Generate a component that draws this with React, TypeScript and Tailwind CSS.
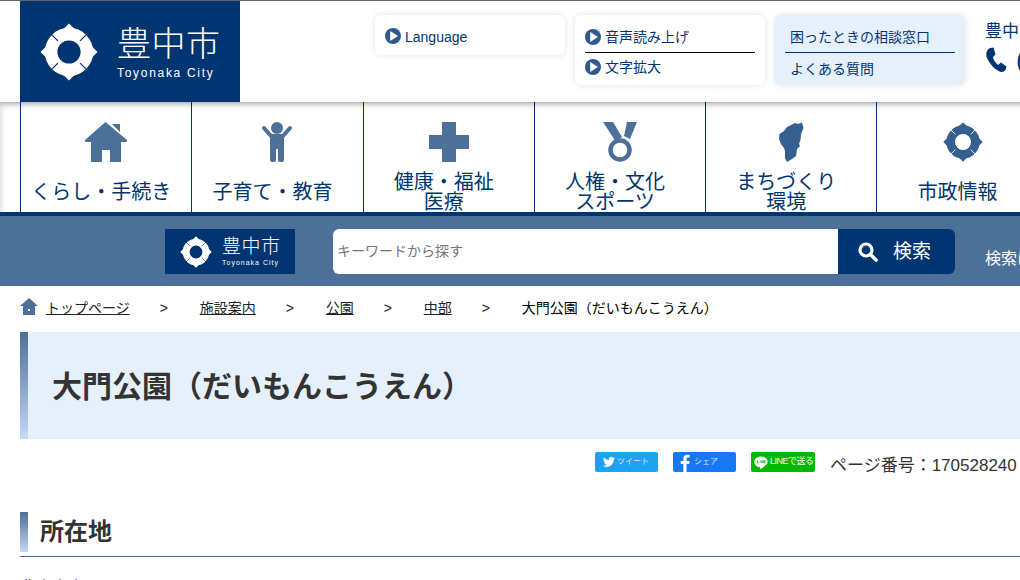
const F = "font-['Liberation_Sans','Noto_Sans_CJK_JP',sans-serif]";

function Emblem({ size, ring = "#ffffff", gap = "#003571" }: { size: number; ring?: string; gap?: string }) {
  return (
    <svg width={size} height={size} viewBox="0 0 60 60" className="shrink-0">
      <circle cx="30" cy="30" r="18.5" fill="none" stroke={ring} strokeWidth="13" />
      <path d="M30 0.500 L36 6.500 L24 6.500 Z M30 59.500 L36 53.500 L24 53.500 Z M0.500 30 L6.500 24 L6.500 36 Z M59.500 30 L53.500 24 L53.500 36 Z" fill={ring} />
      <path d="M18.500 18.500 L10 10 M41.500 18.500 L50 10 M18.500 41.500 L10 50 M41.500 41.500 L50 50" stroke={gap} strokeWidth="1.300" />
    </svg>
  );
}

function Play({ className = "" }: { className?: string }) {
  return (
    <svg width="16" height="16" viewBox="0 0 16 16" className={`shrink-0 ${className}`}>
      <circle cx="8" cy="8" r="8" fill="#2f5a8c" />
      <path d="M5.200 3 L13 8 L5.200 13 Z" fill="#ffffff" />
    </svg>
  );
}

const navIcon = "#4d7099";

const icons: Record<string, React.ReactNode> = {
  home: (
    <svg width="44" height="40" viewBox="0 0 44 40">
      <path d="M28 2 L36 2 L36 10 Z" fill={navIcon} />
      <path d="M21.500 0 L43 18 Q43.500 20 41 20 L37 20 L37 40 L26 40 L26 28 L18 28 L18 40 L7 40 L7 20 L3 20 Q0.500 20 1 18 Z" fill={navIcon} />
    </svg>
  ),
  child: (
    <svg width="32" height="40" viewBox="0 0 32 40">
      <circle cx="16" cy="6" r="6" fill={navIcon} />
      <path d="M3 6 L10 14 L22 14 L29 6" fill="none" stroke={navIcon} strokeWidth="4" strokeLinecap="round" strokeLinejoin="round" />
      <path d="M9 14 H23 V38 Q23 40 21 40 H18.500 Q17 40 17 38 V27 H15 V38 Q15 40 13.500 40 H11 Q9 40 9 38 Z" fill={navIcon} />
    </svg>
  ),
  plus: (
    <svg width="40" height="40" viewBox="0 0 40 40">
      <path d="M13 0 H27 V13 H40 V27 H27 V40 H13 V27 H0 V13 H13 Z" fill={navIcon} />
    </svg>
  ),
  medal: (
    <svg width="34" height="40" viewBox="0 0 34 40">
      <path d="M0 0 H10 L19 15 L13 20 Z M24 0 H34 L27 17 L21 14 Z" fill={navIcon} />
      <circle cx="17" cy="28" r="9.500" fill="none" stroke={navIcon} strokeWidth="4.500" />
    </svg>
  ),
  map: (
    <svg width="26" height="40" viewBox="0 0 26 40">
      <path d="M13 3 L17 1 L20 2 L24 0.500 L25.500 6 L23 12 L22.500 18 L21 22 L22 24 L19 27 L18 34 L14 37 L9 40 L7 36 L7 29 L6 26 L3 22 L1 17 L1.500 12 L6 9 L9 5 Z" fill="#355f8f" />
    </svg>
  ),
  emblem: <Emblem size={40} ring="#355f8f" gap="#ffffff" />,
};

const navItems = [
  { icon: "home", lines: ["くらし・手続き"] },
  { icon: "child", lines: ["子育て・教育"] },
  { icon: "plus", lines: ["健康・福祉", "医療"] },
  { icon: "medal", lines: ["人権・文化", "スポーツ"] },
  { icon: "map", lines: ["まちづくり", "環境"] },
  { icon: "emblem", lines: ["市政情報"] },
];

function BreadSep({ text, link = true }: { text: string; link?: boolean }) {
  return (
    <>
      <span className="ml-[30px] w-[8px] text-[14px]">&gt;</span>
      <span className={`ml-[32px] whitespace-nowrap ${link ? "underline" : "text-black"}`}>{text}</span>
    </>
  );
}

function ShareBtn({ bg, w, children }: { bg: string; w: string; children: React.ReactNode }) {
  return <div className={`flex h-[20px] items-center rounded-[2px] text-white ${bg} ${w}`}>{children}</div>;
}

export default function App() {
  return (
    <div className={`h-[580px] w-[1020px] overflow-hidden bg-white text-[#333333] ${F}`}>
      <div className="relative z-10 flex h-[102px] w-[1100px] border-t border-[#666666] bg-white pl-[20px] shadow-[0_2px_6px_rgba(0,0,0,0.35)]">
        <div className="flex h-[101px] w-[220px] items-center bg-[#003571] pl-[20px] text-white">
          <Emblem size={58} />
          <div className="ml-[19px] flex flex-col">
            <span className="text-[34px] leading-[40px] font-light tracking-[0.5px]">豊中市</span>
            <span className="mt-[2px] text-[12px] leading-[14px] tracking-[1.700px]">Toyonaka City</span>
          </div>
        </div>
        <div className="mt-[14px] ml-[135px] flex h-[40px] w-[190px] items-center rounded-[6px] bg-white pt-[4px] pl-[10px] text-[14px] text-[#003571] shadow-[0_0_6px_rgba(0,0,0,0.12)]">
          <Play className="mb-[3px]" />
          <span className="ml-[4px]">Language</span>
        </div>
        <div className="mt-[14px] ml-[10px] h-[70px] w-[190px] rounded-[6px] bg-white px-[10px] text-[14px] text-[#003571] shadow-[0_0_6px_rgba(0,0,0,0.12)]">
          <div className="flex h-[38px] items-center border-b border-black pt-[8px]">
            <Play className="mb-[2px]" />
            <span className="ml-[4px]">音声読み上げ</span>
          </div>
          <div className="flex h-[30px] items-center pb-[2px]">
            <Play />
            <span className="ml-[4px]">文字拡大</span>
          </div>
        </div>
        <div className="mt-[14px] ml-[10px] h-[70px] w-[190px] rounded-[6px] bg-[#e6f0fb] px-[10px] text-[14px] text-[#003571] shadow-[0_0_6px_rgba(0,0,0,0.12)]">
          <div className="flex h-[38px] items-center border-b border-[#003571] pt-[8px] pl-[5px]">困ったときの相談窓口</div>
          <div className="flex h-[32px] items-center pl-[5px]">よくある質問</div>
        </div>
        <div className="mt-[21px] ml-[20px] flex flex-col text-[#003571]">
          <span className="text-[17px] leading-[20px] whitespace-nowrap">豊中市役所</span>
          <div className="mt-[5px] flex items-center">
            <svg width="22" height="26" viewBox="0 0 22 26">
              <path d="M5 1 L8.500 0.500 L10.500 7.500 L8 10 Q8.500 14 13 18 L16 15.500 L21.500 19.500 L20.500 23 Q18 26 14.500 24.500 Q7 21 2.500 12 Q-1 5 5 1 Z" fill="#003571" />
            </svg>
            <span className="ml-[9px] text-[26px] leading-[26px]">(</span>
          </div>
        </div>
      </div>

      <div className="flex h-[114px] w-[1100px] border-b-4 border-[#003571] pl-[20px] shadow-[inset_5px_0_5px_-3px_rgba(0,0,0,0.12)]">
        {navItems.map((item) => (
          <div key={item.icon} className="flex h-[110px] w-[171.300px] shrink-0 flex-col items-center border-l border-[#003571] text-[20px] leading-[20px] text-[#003571]">
            <div className="flex h-[60px] shrink-0 items-end justify-center">
              {icons[item.icon]}
            </div>
            <div className={`mr-[10px] flex flex-col items-center whitespace-nowrap ${item.lines.length === 1 ? "mt-[20px]" : "mt-[10px]"}`}>
              {item.lines.map((l) => (
                <span key={l}>{l}</span>
              ))}
            </div>
          </div>
        ))}
      </div>

      <div className="flex h-[70px] w-[1100px] bg-[#4d7099] pt-[13px] pl-[165px]">
        <div className="flex h-[45px] w-[130px] items-center bg-[#003571] pl-[15px] text-white">
          <Emblem size={32} />
          <div className="ml-[10px] flex flex-col">
            <span className="text-[19px] leading-[22px] font-light tracking-[0.500px]">豊中市</span>
            <span className="text-[7px] leading-[9px] tracking-[1px]">Toyonaka City</span>
          </div>
        </div>
        <div className="ml-[38px] flex h-[45px] w-[505px] items-center rounded-l-[6px] bg-white pl-[4px] text-[14px] text-[#757575]">キーワードから探す</div>
        <div className="flex h-[45px] w-[117px] items-center rounded-r-[6px] bg-[#003571] pl-[20px] text-[19px] text-white">
          <svg width="20" height="20" viewBox="0 0 20 20">
            <circle cx="8" cy="8" r="6" fill="none" stroke="#ffffff" strokeWidth="3.200" />
            <path d="M12.500 12.500 L18 18" stroke="#ffffff" strokeWidth="3.600" strokeLinecap="round" />
          </svg>
          <span className="mt-[2px] ml-[15px]">検索</span>
        </div>
        <span className="mt-[20px] ml-[30px] text-[16px] leading-[20px] whitespace-nowrap text-white">検索について</span>
      </div>

      <div className="flex h-[46px] items-center pb-[2px] pl-[20px] text-[14px] whitespace-nowrap text-[#222222]">
        <svg width="18" height="18" viewBox="0 0 18 18" className="mb-[3px]">
          <path d="M9 0 L18 8 L15 8 L15 17 L3 17 L3 8 L0 8 Z" fill="#4d7099" />
          <rect x="8" y="11" width="2" height="2" fill="#ffffff" />
        </svg>
        <span className="ml-[8px] underline">トップページ</span>
        <BreadSep text="施設案内" />
        <BreadSep text="公園" />
        <BreadSep text="中部" />
        <BreadSep text="大門公園（だいもんこうえん）" link={false} />
      </div>

      <div className="ml-[20px] flex h-[107px] w-[1080px] bg-[#e6f0fb]">
        <div className="w-[8px] bg-gradient-to-b from-[#4d7099] to-[#c5daf5]" />
        <h1 className="mt-[33px] ml-[24px] text-[30px] leading-[44px] font-bold whitespace-nowrap">大門公園（だいもんこうえん）</h1>
      </div>

      <div className="mt-[13px] flex h-[20px] w-[1100px] pl-[595px] whitespace-nowrap">
        <ShareBtn bg="bg-[#1da1f2]" w="w-[63px]">
          <svg width="12" height="10" viewBox="0 0 24 20" className="ml-[8px]">
            <path d="M24 2.400a10 10 0 0 1-2.800.8A5 5 0 0 0 23.300.5a10 10 0 0 1-3.100 1.200A4.900 4.900 0 0 0 11.800 6.200 14 14 0 0 1 1.700 1a5 5 0 0 0 1.500 6.600 5 5 0 0 1-2.200-.6 5 5 0 0 0 3.900 4.900 5 5 0 0 1-2.200.1 5 5 0 0 0 4.600 3.400A10 10 0 0 1 0 17.500 14 14 0 0 0 21.500 5.600 10 10 0 0 0 24 2.400z" fill="#ffffff" />
          </svg>
          <span className="ml-[2px] text-[8px] opacity-80">ツイート</span>
        </ShareBtn>
        <div className="ml-[15px]">
          <ShareBtn bg="bg-[#1877f2]" w="w-[63px]">
            <svg width="10" height="18" viewBox="0 0 10 18" className="mt-[1px] ml-[7px]">
              <path d="M6.500 18V10h2.700l.4-3H6.500V5c0-.9.3-1.500 1.500-1.500H9.700V.8C9.400.8 8.400.7 7.300.7 5 .7 3.400 2.100 3.400 4.700V7H.7v3h2.700v8z" fill="#ffffff" />
            </svg>
            <span className="ml-[4px] text-[8px] opacity-80">シェア</span>
          </ShareBtn>
        </div>
        <div className="ml-[15px]">
          <ShareBtn bg="bg-[#00b900]" w="w-[64px]">
            <svg width="14" height="13" viewBox="0 0 14 13" className="ml-[3px]">
              <path d="M7 0.500C3.300 0.500 0.300 2.900 0.300 5.900c0 2.700 2.400 4.900 5.600 5.300.6.100.4.800.3 1.300 0 .3.200.4.500.2 1.500-.8 5-3 6.200-4.700.5-.7.800-1.400.8-2.100C13.700 2.900 10.700.5 7 .5z" fill="#ffffff" />
              <path d="M3.500 4.500V7H5M6.200 4.500V7M7.800 7V4.500L9.300 7V4.500M11.500 4.500H10.200V7H11.500M10.200 5.750H11.300" fill="none" stroke="#00b900" strokeWidth="0.700" />
            </svg>
            <span className="ml-[2px] text-[9px] tracking-[-0.500px]">LINEで送る</span>
          </ShareBtn>
        </div>
        <span className="mt-[2px] ml-[15px] text-[17px] leading-[24px]">ページ番号：170528240</span>
      </div>

      <div className="mt-[40px] ml-[20px] flex h-[45px] w-[1080px] border-b border-[#3f6b9c]">
        <div className="h-[40px] w-[8px] bg-gradient-to-b from-[#4d7099] to-[#c5daf5]" />
        <h2 className="ml-[12px] text-[24px] leading-[40px] font-bold">所在地</h2>
      </div>
      <p className="mt-[19px] ml-[20px] text-[16px] leading-[24px]">豊中市大門町1丁目</p>
    </div>
  );
}
